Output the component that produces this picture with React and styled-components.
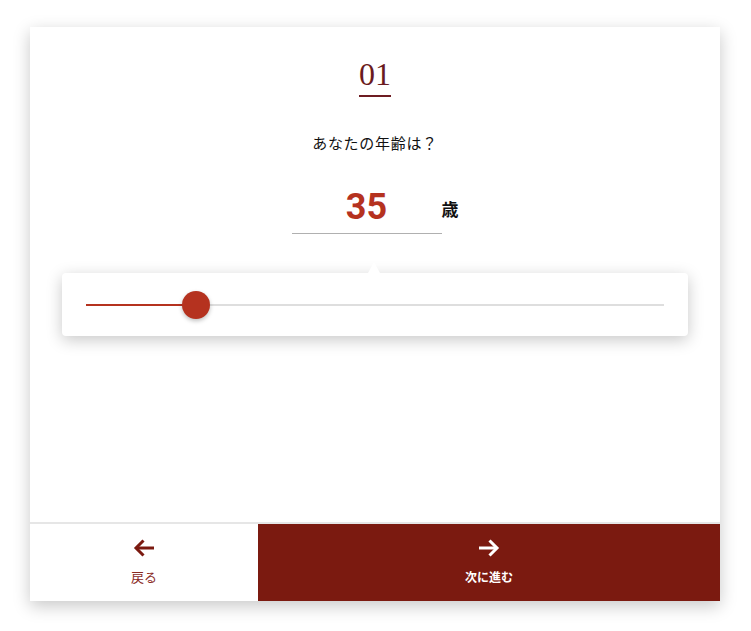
import React from "react";
import styled, { createGlobalStyle } from "styled-components";

const Global = createGlobalStyle`
  html, body { margin: 0; padding: 0; background: #ffffff; }
  body { font-family: "Noto Sans CJK JP", "Noto Sans", sans-serif; }
`;

const Page = styled.div`
  min-height: 631px;
  box-sizing: border-box;
  padding: 27px 0 30px 30px;
`;

const Card = styled.div`
  width: 690px;
  height: 574px;
  background: #fff;
  box-shadow: 0 5px 16px rgba(0, 0, 0, 0.22);
  display: flex;
  flex-direction: column;
`;

const Body = styled.div`
  flex: 1;
  display: flex;
  flex-direction: column;
  align-items: center;
  padding-top: 31px;
`;

const StepNumber = styled.div`
  font-family: "Liberation Serif", "DejaVu Serif", serif;
  font-size: 32px;
  line-height: 32px;
  color: #6a1a20;
  display: flex;
  flex-direction: column;
  align-items: center;
  &::after {
    content: "";
    display: block;
    width: 32px;
    height: 2px;
    margin-top: 5px;
    background: #6e1c22;
  }
`;

const Question = styled.div`
  margin-top: 35px;
  font-size: 15px;
  line-height: 22px;
  color: #111;
  letter-spacing: 0.7px;
`;

const ValueRow = styled.div`
  margin-top: 35px;
  display: flex;
  align-items: flex-start;
`;

const ValueField = styled.div`
  width: 150px;
  padding-bottom: 8px;
  border-bottom: 1px solid #b0b0b0;
  text-align: center;
  font-family: Roboto, "Liberation Sans", sans-serif;
  font-weight: 700;
  font-size: 36px;
  line-height: 36px;
  color: #b5321f;
`;

const Unit = styled.div`
  margin-top: 11px;
  font-size: 17px;
  line-height: 17px;
  font-weight: 700;
  color: #111;
`;

const Popover = styled.div`
  position: relative;
  align-self: stretch;
  margin: 39px 32px 0;
  height: 63px;
  background: #fff;
  border-radius: 4px;
  box-shadow: 0 4px 16px rgba(0, 0, 0, 0.22);
  display: flex;
  align-items: center;
  padding: 0 24px;
  &::before {
    content: "";
    position: absolute;
    top: -11px;
    left: 306px;
    border-left: 6px solid transparent;
    border-right: 6px solid transparent;
    border-bottom: 11px solid #fff;
  }
`;

const Track = styled.div`
  position: relative;
  flex: 1;
  height: 2px;
  background: #dedede;
`;

const Fill = styled.div`
  position: absolute;
  left: 0;
  top: 0;
  height: 2px;
  background: #b5321f;
`;

const Thumb = styled.div`
  position: absolute;
  top: -13px;
  width: 28px;
  height: 28px;
  margin-left: -14px;
  border-radius: 50%;
  background: #b5321f;
  box-shadow: 0 2px 4px rgba(0, 0, 0, 0.25);
`;

const Footer = styled.div`
  height: 79px;
  border-top: 2px solid #e6e6e6;
  box-sizing: border-box;
  display: grid;
  grid-template-columns: 228px 1fr;
`;

const NavButton = styled.div`
  display: flex;
  flex-direction: column;
  align-items: center;
  padding-top: 15px;
  gap: 10px;
  background: ${(p) => (p.$primary ? "#7b1a10" : "#fff")};
  color: ${(p) => (p.$primary ? "#fff" : "#8a2a1f")};
  font-size: ${(p) => (p.$primary ? "12px" : "13px")};
  font-weight: ${(p) => (p.$primary ? 700 : 400)};
  line-height: 20px;
  svg {
    display: block;
    color: ${(p) => (p.$primary ? "#fff" : "#7b1a10")};
  }
`;

const Arrow = ({ dir }) => (
  <svg width="22" height="18" viewBox="0 0 22 18" fill="none" stroke="currentColor" strokeWidth="3">
    {dir === "left" ? (
      <>
        <path d="M21 9H3" />
        <path d="M10.5 1.5L3 9l7.5 7.5" />
      </>
    ) : (
      <>
        <path d="M1 9h18" />
        <path d="M11.5 1.5L19 9l-7.5 7.5" />
      </>
    )}
  </svg>
);

export default function App() {
  const min = 15;
  const max = 120;
  const value = 35;
  const pct = ((value - min) / (max - min)) * 100;
  return (
    <>
      <Global />
      <Page>
        <Card>
          <Body>
            <StepNumber>01</StepNumber>
            <Question>あなたの年齢は？</Question>
            <ValueRow>
              <ValueField>{value}</ValueField>
              <Unit>歳</Unit>
            </ValueRow>
            <Popover>
              <Track>
                <Fill style={{ width: `${pct}%` }} />
                <Thumb style={{ left: `${pct}%` }} />
              </Track>
            </Popover>
          </Body>
          <Footer>
            <NavButton>
              <Arrow dir="left" />
              <span>戻る</span>
            </NavButton>
            <NavButton $primary>
              <Arrow dir="right" />
              <span>次に進む</span>
            </NavButton>
          </Footer>
        </Card>
      </Page>
    </>
  );
}
